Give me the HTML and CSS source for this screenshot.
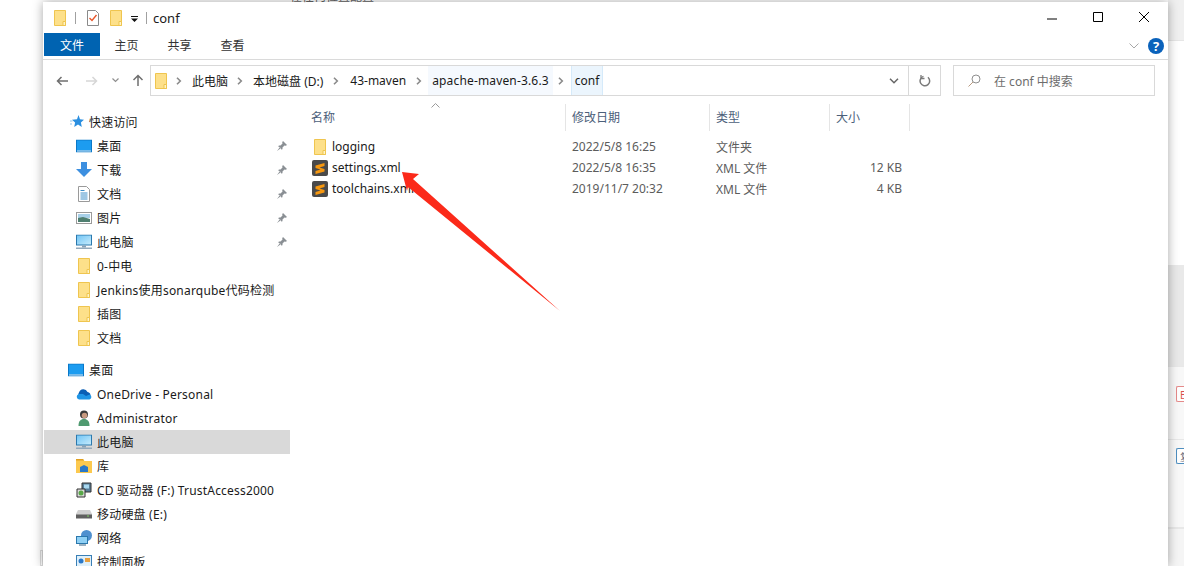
FILE: index.html
```html
<!DOCTYPE html>
<html lang="zh">
<head>
  <meta charset="UTF-8" />
  <title>conf</title>
  <link rel="stylesheet" href="styles.css">
</head>
<body>
  <svg class="defs" width="0" height="0">
    <defs>
      <linearGradient id="screen" x1="0" y1="0" x2="1" y2="1">
        <stop offset="0" stop-color="#6fc4f5"/>
        <stop offset="1" stop-color="#c8ecfc"/>
      </linearGradient>
    </defs>
    <symbol id="folder" viewBox="0 0 12 16">
      <path d="M.5.5h11v15H.5z" fill="#fde08a" stroke="#efc54f"/>
      <path d="M9 15.500v-4h2.500v4z" fill="#fff4c8" stroke="#efc54f"/>
    </symbol>
    <symbol id="subl" viewBox="0 0 16 16">
      <rect width="16" height="16" rx="2" fill="#4a4a4a"/>
      <path d="M3.500 5.500 12.500 3V6L7.500 7.500 12.500 9V11.500L3.500 14V11L8.500 9.500 3.500 8z" fill="#f7980f"/>
    </symbol>
    <symbol id="desk" viewBox="0 0 16 13">
      <rect width="16" height="13" fill="#0a78c8"/>
      <rect x="1" y="1" width="14" height="10" fill="#1c9cf0"/>
      <rect x="1" y="11" width="14" height="1" fill="#dff0fb"/>
    </symbol>
    <symbol id="pc" viewBox="0 0 16 15">
      <rect x=".5" y=".5" width="15" height="10" fill="url(#screen)" stroke="#2b78ad"/>
      <path d="M6 11h4v2H6z" fill="#8aa2b5"/>
      <path d="M0 13h16v1.500H0z" fill="#93a9bb"/>
    </symbol>
    <symbol id="pin" viewBox="0 0 10 10">
      <path d="M6 0 10 4 8.800 4.800 7.500 4.500 5.500 6.500 5.500 8 4.800 8.800 1.200 5.200 2 4.500H3.500L5.500 2.500 5.200 1.200zM2.800 6.200 0 10l3.800-2.800z" fill="#8a8f94"/>
    </symbol>
    <symbol id="chev" viewBox="0 0 6 8">
      <path d="M1 .7 4.300 4 1 7.300" fill="none" stroke="#8a8a8a" stroke-width="1.600"/>
    </symbol>
  </svg>

  <div class="backdrop-left"><div class="bl-box"></div></div>

  <div class="window">
    <div class="titlebar">
      <svg class="ico12 qa1"><use href="#folder"/></svg>
      <span class="qa-sep"></span>
      <svg class="qa-check" viewBox="0 0 12 16" width="12" height="16">
        <path d="M.5.5h8l3 3v12H.5z" fill="#fff" stroke="#8a8a8a"/>
        <path d="M2.500 8 5 10.500 9.500 5" fill="none" stroke="#e8562a" stroke-width="1.400"/>
      </svg>
      <svg class="ico12 qa2"><use href="#folder"/></svg>
      <svg class="qa-drop" viewBox="0 0 7 6" width="7" height="6"><path d="M0 0h7v1H0zM0 2.500h7L3.500 6z" fill="#111"/></svg>
      <span class="qa-sep sep2"></span>
      <span class="win-title">conf</span>
      <div class="win-btns">
        <svg viewBox="0 0 46 30" width="46" height="30"><path d="M18 17h10" stroke="#000" fill="none"/></svg>
        <svg viewBox="0 0 46 30" width="46" height="30"><path d="M18.500 10.500h9v9h-9z" stroke="#000" fill="none"/></svg>
        <svg viewBox="0 0 46 30" width="46" height="30"><path d="M18 10l10 10M28 10 18 20" stroke="#000" fill="none"/></svg>
      </div>
    </div>

    <div class="ribbon">
      <span class="tab tab-file">文件</span>
      <span class="tab">主页</span>
      <span class="tab">共享</span>
      <span class="tab">查看</span>
      <div class="ribbon-right">
        <svg viewBox="0 0 10 6" width="10" height="6"><path d="M.5.500 5 5 9.500.5" fill="none" stroke="#a8a8a8"/></svg>
        <span class="help">?</span>
      </div>
    </div>

    <div class="navrow">
      <div class="navbtns">
        <svg viewBox="0 0 12 10" width="12" height="10"><path d="M12 5H1.500M5.500 1 1.500 5l4 4" fill="none" stroke="#6f6f6f" stroke-width="1.500"/></svg>
        <svg viewBox="0 0 12 10" width="12" height="10"><path d="M0 5h10.500M6.500 1l4 4-4 4" fill="none" stroke="#d6d6d6" stroke-width="1.500"/></svg>
        <svg viewBox="0 0 7 5" width="7" height="5"><path d="M.5.500 3.500 3.500 6.500.5" fill="none" stroke="#8f8f8f" stroke-width="1.200"/></svg>
        <svg viewBox="0 0 12 12" width="12" height="12"><path d="M6 12V1.500M1.500 6 6 1.500 10.500 6" fill="none" stroke="#6f6f6f" stroke-width="1.500"/></svg>
      </div>
      <div class="addr">
        <svg class="ico12"><use href="#folder"/></svg>
        <svg class="crumb-chev c1"><use href="#chev"/></svg>
        <span class="crumb">此电脑</span>
        <svg class="crumb-chev"><use href="#chev"/></svg>
        <span class="crumb">本地磁盘 (D:)</span>
        <svg class="crumb-chev c3"><use href="#chev"/></svg>
        <span class="crumb">43-maven</span>
        <svg class="crumb-chev c4"><use href="#chev"/></svg>
        <span class="crumb crumb-hi">apache-maven-3.6.3</span>
        <svg class="crumb-chev c5"><use href="#chev"/></svg>
        <span class="crumb crumb-cur">conf</span>
        <svg class="addr-drop" viewBox="0 0 10 6" width="10" height="6"><path d="M1 .7 5 4.700 9 .7" fill="none" stroke="#666" stroke-width="1.500"/></svg>
        <div class="addr-refresh">
          <svg viewBox="0 0 12 12" width="12" height="12"><path d="M3 2.200A4.800 4.800 0 1 0 7.500 1.500" fill="none" stroke="#7a7a7a" stroke-width="1.500" transform="rotate(20 6 6)"/><path d="M2 0v3.500h3.500" fill="none" stroke="#7a7a7a" stroke-width="1.300"/></svg>
        </div>
      </div>
      <div class="search">
        <svg viewBox="0 0 13 13" width="13" height="13"><circle cx="8" cy="5" r="4" fill="none" stroke="#8f8f8f"/><path d="M5 8 .5 12.500" stroke="#b89a80" fill="none"/></svg>
        <span>在 conf 中搜索</span>
      </div>
    </div>

    <div class="main">
      <nav class="sidebar">
        <div class="row row-top">
          <svg class="ico-star" viewBox="0 0 14 14" width="14" height="14"><path d="M8.500 0l1.500 4.300 4 .4-3.100 2.800.9 4.500-3.800-2.400-3.800 2.400.9-4.500L2 4.700l5-.4z" fill="#2b8fe0"/><path d="M0 6h2.500M0 9h2" stroke="#8fc4ee"/></svg>
          <span>快速访问</span>
        </div>
        <div class="row sub"><svg class="ico" viewBox="0 0 16 13"><use href="#desk"/></svg><span>桌面</span><svg class="pin"><use href="#pin"/></svg></div>
        <div class="row sub">
          <svg class="ico" viewBox="0 0 16 16"><path d="M5 0h6v7h5l-8 8-8-8h5z" fill="#3c8fe0"/></svg>
          <span>下载</span><svg class="pin"><use href="#pin"/></svg>
        </div>
        <div class="row sub">
          <svg class="ico" viewBox="0 0 16 16"><path d="M2.500.5h8l3 3v12h-11z" fill="#fff" stroke="#9a9a9a"/><path d="M4.500 4.500h4M4.500 7h7M4.500 9h7M4.500 11h7M4.500 13h7" stroke="#3f8fc8"/></svg>
          <span>文档</span><svg class="pin"><use href="#pin"/></svg>
        </div>
        <div class="row sub">
          <svg class="ico" viewBox="0 0 16 12"><rect x=".5" y=".5" width="15" height="11" fill="#fff" stroke="#9a9a9a"/><rect x="2" y="2" width="12" height="4" fill="#a8d0e8"/><path d="M2 6l5-1 7 2v3H2z" fill="#4f7f70"/></svg>
          <span>图片</span><svg class="pin"><use href="#pin"/></svg>
        </div>
        <div class="row sub"><svg class="ico" viewBox="0 0 16 15"><use href="#pc"/></svg><span>此电脑</span><svg class="pin"><use href="#pin"/></svg></div>
        <div class="row sub"><svg class="ico"><use href="#folder"/></svg><span>0-中电</span></div>
        <div class="row sub"><svg class="ico"><use href="#folder"/></svg><span>Jenkins使用sonarqube代码检测</span></div>
        <div class="row sub"><svg class="ico"><use href="#folder"/></svg><span>插图</span></div>
        <div class="row sub"><svg class="ico"><use href="#folder"/></svg><span>文档</span></div>

        <div class="row row-top row-desk"><svg class="ico" viewBox="0 0 16 13"><use href="#desk"/></svg><span>桌面</span></div>
        <div class="row sub">
          <svg class="ico" viewBox="0 0 16 11"><path d="M3.500 8A3 3 0 0 1 3 4 4.500 4.500 0 0 1 11.500 3.500 3 3 0 0 1 14 8z" fill="#0a5fb5"/><path d="M3 11A2.800 2.800 0 0 1 3 5.500L7 5.500 10 7.500 13.500 6A2.600 2.600 0 0 1 13.500 11z" fill="#1f95e6"/></svg>
          <span>OneDrive - Personal</span>
        </div>
        <div class="row sub">
          <svg class="ico" viewBox="0 0 16 16"><circle cx="8" cy="4.500" r="4" fill="#3a3a3a"/><circle cx="8.500" cy="5.500" r="2.800" fill="#c89a80"/><path d="M2.500 16c0-5 2-7 5.500-7s5.500 2 5.500 7z" fill="#4f9a70"/></svg>
          <span>Administrator</span>
        </div>
        <div class="row sub row-sel"><svg class="ico" viewBox="0 0 16 15"><use href="#pc"/></svg><span>此电脑</span></div>
        <div class="row sub">
          <svg class="ico" viewBox="0 0 16 14"><path d="M0 0h7l1.500 2H16v12H0z" fill="#fcc94f"/><path d="M0 0h7l1 1.500H0z" fill="#e0a020"/><path d="M4 13V8l4-2 4 2v5z" fill="#2a78c8"/></svg>
          <span>库</span>
        </div>
        <div class="row sub">
          <svg class="ico" viewBox="0 0 16 16"><path d="M6 1h9v9H6z" fill="#5a7e98" stroke="#333"/><path d="M8 2.500h5v4H8z" fill="#a8d8f0"/><path d="M1 7h8v8H1z" fill="#dcdcdc" stroke="#333"/><circle cx="5" cy="11" r="2.500" fill="#58a848"/></svg>
          <span>CD 驱动器 (F:) TrustAccess2000</span>
        </div>
        <div class="row sub">
          <svg class="ico" viewBox="0 0 16 9"><path d="M2 .5h12l2 4v4H0v-4z" fill="#d0d0d0"/><path d="M0 5h16v4H0z" fill="#5f5f5f"/><path d="M11 6.500h2" stroke="#7fd060"/></svg>
          <span>移动硬盘 (E:)</span>
        </div>
        <div class="row sub">
          <svg class="ico" viewBox="0 0 16 16"><circle cx="10.500" cy="5.500" r="5.500" fill="#4f90cf"/><rect x=".5" y="6.500" width="11" height="7" fill="#8fd0f5" stroke="#2b78ad"/><path d="M3 15h7" stroke="#7a97ad" stroke-width="1.500"/></svg>
          <span>网络</span>
        </div>
        <div class="row sub">
          <svg class="ico" viewBox="0 0 16 14"><rect x=".5" y=".5" width="15" height="13" fill="#dff0fa" stroke="#3a7fb5"/><circle cx="5" cy="6" r="2.500" fill="#2a78c8"/><rect x="9" y="3" width="5" height="4" fill="#e8a040"/></svg>
          <span>控制面板</span>
        </div>
      </nav>

      <div class="files">
        <div class="fhead">
          <span class="col-name">名称<svg class="sort" viewBox="0 0 9 5" width="9" height="5"><path d="M.5 4.500 4.500.5l4 4" fill="none" stroke="#9a9a9a"/></svg></span>
          <span>修改日期</span>
          <span>类型</span>
          <span>大小</span>
        </div>
        <div class="frow frow-first">
          <span class="fname"><svg class="ico-file f-folder"><use href="#folder"/></svg>logging</span>
          <span class="meta">2022/5/8 16:25</span>
          <span class="meta">文件夹</span>
          <span class="meta size"></span>
        </div>
        <div class="frow">
          <span class="fname"><svg class="ico-file"><use href="#subl"/></svg>settings.xml</span>
          <span class="meta">2022/5/8 16:35</span>
          <span class="meta">XML 文件</span>
          <span class="meta size">12 KB</span>
        </div>
        <div class="frow">
          <span class="fname"><svg class="ico-file"><use href="#subl"/></svg>toolchains.xml</span>
          <span class="meta">2019/11/7 20:32</span>
          <span class="meta">XML 文件</span>
          <span class="meta size">4 KB</span>
        </div>
      </div>
    </div>
  </div>

  <div class="backdrop-right">
    <div class="br-top"></div>
    <div class="br-white"></div>
    <div class="br-gray"></div>
    <div class="br-cell"><span class="tag tag-red">E</span></div>
    <div class="br-cell br-cell2"><span class="tag tag-blue">复</span></div>
    <div class="br-last"></div>
  </div>

  <!-- page behind the window, just its last text line shows above the title bar -->
  <div class="top-clip"><span>在任何位置配置</span></div>

  <!-- red annotation arrow on top of the file list -->
  <svg class="arrow" viewBox="0 0 1184 566" width="1184" height="566">
    <path d="M402 172 419 174 413 179 560 311 408 187 407 191z" fill="#fb2a1a"/>
  </svg>
</body>
</html>
```

FILE: styles.css
```css
html, body {
  margin: 0;
  height: 566px;
  overflow: hidden;
}
body {
  display: flex;
  position: relative;
  width: 1184px;
  background: #fff;
  font-family: "Noto Sans", "Noto Sans CJK SC", sans-serif;
  font-size: 12px;
  color: #1a1a1a;
}
svg { display: block; flex: none; }
.defs { position: absolute; }

.backdrop-left {
  width: 43px;
  flex: none;
}
.bl-box {
  margin: 550px 0 0 40px;
  height: 16px;
  border: 1px solid #ddd;
  box-sizing: border-box;
}
.backdrop-right {
  width: 16px;
  flex: none;
  background: #f5f5f5;
  display: flex;
  flex-direction: column;
}
.br-top { height: 40px; background: #f0f0f0; }
.br-white { height: 225px; background: #fff; border-top: 1px solid #e6e6e6; box-sizing: border-box; }
.br-gray { height: 101px; background: #e9e9e9; }
.br-cell { height: 73px; background: #f8f8f8; border-top: 1px solid #e8e8e8; padding: 19px 0 0 8px; box-sizing: border-box; }
.br-cell2 { height: 88px; padding-top: 8px; }
.br-last { flex: 1; border-top: 2px solid #e8e8e8; }
.tag {
  display: block;
  width: 8px;
  height: 16px;
  border: 1px solid #e58a8a;
  border-right: none;
  border-radius: 2px 0 0 2px;
  color: #d9534f;
  font-size: 10px;
  line-height: 16px;
  overflow: hidden;
  padding-left: 3px;
  box-sizing: border-box;
  background: #fff;
}
.tag-blue { border-color: #4f8fc0; color: #667; }

.top-clip {
  position: absolute;
  left: 290px;
  top: 0;
  height: 3px;
  overflow: hidden;
  z-index: 2;
  line-height: 12px;
  color: #555;
}
.top-clip span { display: block; margin-top: -9px; }

.window {
  width: 1125px;
  flex: none;
  margin-top: 2px;
  background: #fff;
  box-shadow: 0 0 10px rgba(0, 0, 0, 0.35);
  position: relative;
  z-index: 1;
}

.titlebar {
  height: 31px;
  display: flex;
  align-items: center;
  padding-left: 11px;
}
.ico12 { width: 12px; height: 16px; }
.qa-sep { width: 1px; height: 12px; background: #a0a0a0; margin: 0 11px 0 9px; }
.qa-check { margin-right: 11px; }
.qa-drop { margin: 2px 8px 0 9px; }
.sep2 { margin: 0 6px 0 0; }
.win-title { font-size: 13px; }
.win-btns {
  display: flex;
  margin-left: auto;
  margin-right: 1px;
  margin-top: -2px;
}

.ribbon {
  height: 26px;
  display: flex;
  align-items: flex-start;
  border-bottom: 1px solid #dadada;
  padding-left: 1px;
}
.tab {
  width: 53px;
  height: 23px;
  line-height: 25px;
  text-align: center;
  color: #333;
}
.tab-file {
  width: 56px;
  background: #0063b1;
  color: #fff;
}
.ribbon-right {
  margin-left: auto;
  margin-right: 4px;
  display: flex;
  align-items: center;
  gap: 9px;
  height: 26px;
}
.help {
  width: 16px;
  height: 16px;
  border-radius: 50%;
  background: #0a62bb;
  color: #fff;
  font-weight: 700;
  font-size: 13px;
  line-height: 16px;
  text-align: center;
}

.navrow {
  height: 41px;
  display: flex;
  align-items: flex-start;
  padding-top: 5px;
  box-sizing: border-box;
}
.navbtns {
  width: 107px;
  height: 31px;
  flex: none;
  display: flex;
  align-items: center;
  gap: 18px;
  padding-left: 13px;
  box-sizing: border-box;
}
.navbtns svg:nth-child(3) { margin-left: -4px; }
.navbtns svg:nth-child(4) { margin-left: -5px; margin-top: -2px; }
.addr {
  width: 791px;
  height: 31px;
  flex: none;
  display: flex;
  align-items: center;
  border: 1px solid #d9d9d9;
  box-sizing: border-box;
  padding-left: 4px;
}
.crumb-chev {
  width: 6px;
  height: 8px;
  margin: 0 10px 0 9px;
}
.crumb-chev.c3 { margin: 0 11px 0 10px; }
.crumb-chev.c4 { margin: 0 6px 0 10px; }
.crumb-chev.c5 { margin: 0 7px 0 5px; }
.crumb { color: #1a1a1a; }
.crumb-hi {
  height: 29px;
  line-height: 29px;
  background: #f5f9fe;
  padding: 0 4px;
  letter-spacing: 0.16px;
}
.crumb-cur {
  height: 29px;
  line-height: 29px;
  background: #ebf5fd;
  border: 1px solid #d5eafa;
  border-width: 0 1px;
  padding: 0 3px;
}
.addr-drop { margin-left: auto; margin-right: 9px; }
.addr-refresh {
  width: 31px;
  height: 29px;
  border-left: 1px solid #d9d9d9;
  display: flex;
  align-items: center;
  justify-content: center;
}
.search {
  width: 202px;
  height: 31px;
  flex: none;
  margin-left: 12px;
  border: 1px solid #d9d9d9;
  box-sizing: border-box;
  display: flex;
  align-items: center;
  gap: 13px;
  padding-left: 14px;
  color: #6d6d6d;
}

.main {
  display: flex;
  padding-top: 9px;
}
.sidebar {
  width: 250px;
  flex: none;
  letter-spacing: 0.2px;
}
.row {
  height: 24px;
  display: flex;
  align-items: center;
  margin: 0 3px 0 1px;
  white-space: nowrap;
}
.row-top { padding-left: 27px; }
.ico-star { margin-right: 5px; margin-left: -1px; }
.row-desk { padding-left: 24px; margin-top: 8px; }
.row-desk .ico { margin-right: 5px; }
.sub { padding-left: 32px; }
.ico {
  width: 16px;
  height: 16px;
  margin-right: 5px;
}
.row-sel { background: #d9d9d9; }
.pin {
  width: 10px;
  height: 10px;
  position: absolute;
  left: 234px;
}

.files { flex: 1; margin-top: -6px; }
.fhead, .frow {
  display: grid;
  grid-template-columns: 273px 144px 120px 80px;
}
.fhead { height: 27px; }
.fhead span {
  border-right: 1px solid #e5e5e5;
  padding-left: 6px;
  line-height: 27px;
  color: #4c607a;
  box-sizing: border-box;
}
.fhead .col-name {
  padding-left: 18px;
  position: relative;
}
.sort {
  position: absolute;
  left: 138px;
  top: -1px;
}
.frow {
  height: 21px;
  align-items: center;
  white-space: nowrap;
}
.frow-first { margin-top: 5px; }
.fname {
  display: flex;
  align-items: center;
  padding-left: 19px;
}
.ico-file {
  width: 16px;
  height: 16px;
  margin-right: 4px;
}
.meta {
  padding-left: 6px;
  color: #5c5c5c;
}
.size {
  text-align: right;
  padding-right: 8px;
}

.arrow {
  position: absolute;
  left: 0;
  top: 0;
  z-index: 2;
  pointer-events: none;
}
```
